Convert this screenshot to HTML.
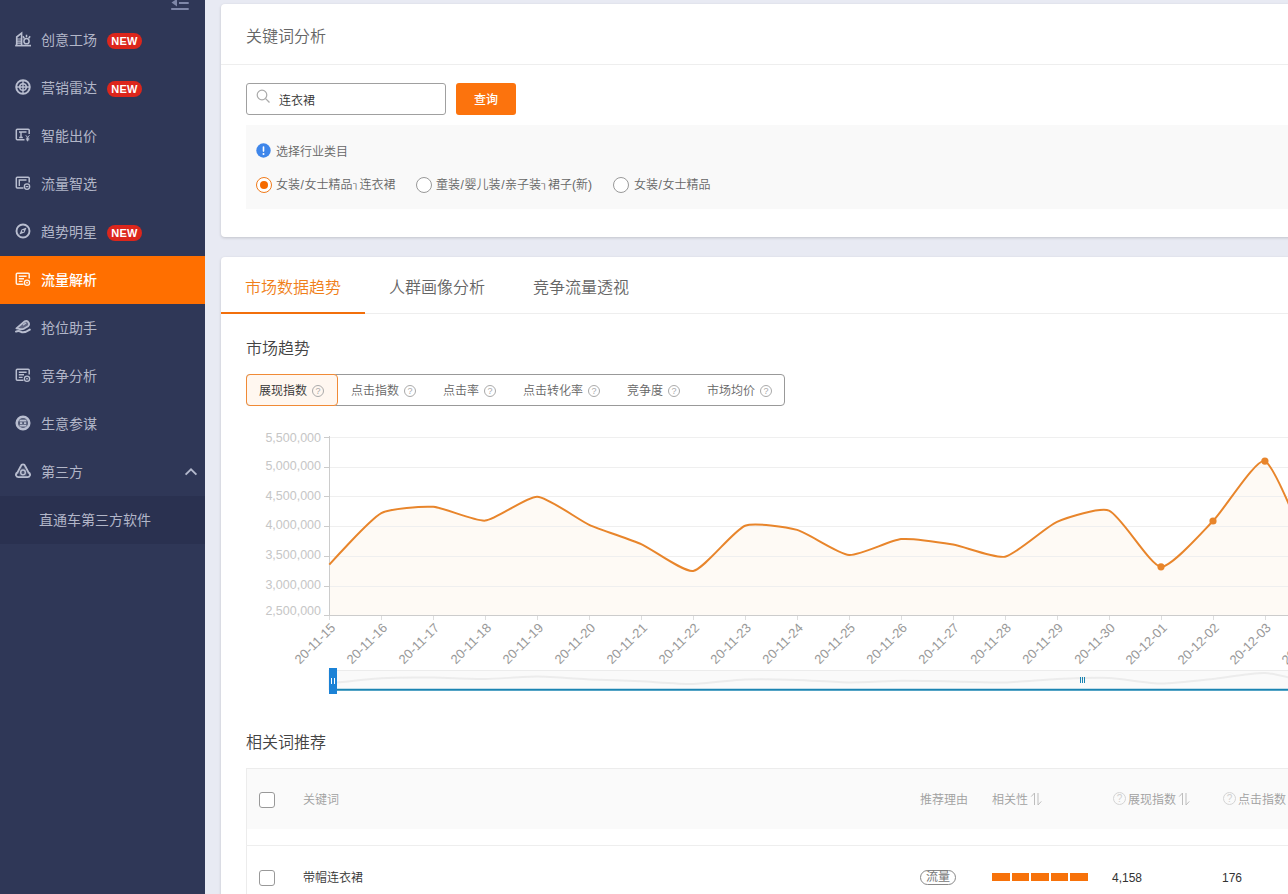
<!DOCTYPE html>
<html lang="zh-CN">
<head>
<meta charset="utf-8">
<title>流量解析</title>
<style>
*{box-sizing:border-box;margin:0;padding:0}
html,body{width:1288px;height:894px;overflow:hidden}
body{background:#e8eaf3;font-family:"Liberation Sans","Noto Sans CJK SC",sans-serif;font-size:12px;color:#333;position:relative;font-weight:350}
.abs{position:absolute}
/* sidebar */
#side{position:absolute;left:0;top:0;width:205px;height:894px;background:#2f3757}
.mi{position:absolute;left:0;width:205px;height:48px;color:#b2b6c8;font-size:14px;line-height:48px;font-weight:400}
.mi .tx{position:absolute;left:41px;top:0;white-space:nowrap}
.mi svg.ic{position:absolute;left:15px;top:15px;width:16px;height:16px;color:#b9bed0}
.mi.act svg.ic{color:#fff3e6}
.mi.act{background:#ff6f00;color:#fff;font-weight:500}
.new{position:absolute;left:107px;top:17px;width:35px;height:16px;border-radius:8px;background:#dc261c;color:#fff;font-size:11px;font-weight:bold;line-height:16px;text-align:center;letter-spacing:0.2px;font-family:"Liberation Sans",sans-serif}
#sub{position:absolute;left:0;top:496px;width:205px;height:48px;background:#2a3150;color:#b2b6c8;font-size:14px;line-height:48px;font-weight:400}
#sub span{position:absolute;left:39px}
/* cards */
.card{position:absolute;left:221px;width:1100px;background:#fff;border-radius:4px;box-shadow:0 1px 3px rgba(0,0,0,.17)}
#c1{top:4px;height:233px}
#c2{top:257px;height:700px}
.t16{font-size:16px;color:#666;white-space:nowrap;position:absolute;line-height:20px}
.hr{position:absolute;left:0;right:0;height:1px;background:#eee}

#inp{position:absolute;left:25px;top:79px;width:200px;height:32px;border:1px solid #a0a0a0;border-radius:3px;background:#fff}
#inp span{position:absolute;left:32px;top:2px;line-height:30px;font-size:12px;color:#333}
#btn{position:absolute;left:235px;top:79px;width:60px;height:32px;border-radius:3px;background:#fc730d;color:#fff;font-size:12px;font-weight:500;text-align:center;line-height:35px}
#gbox{position:absolute;left:25px;top:121px;right:0;height:84px;background:#f9f9f9}
.lab{position:absolute;font-size:12px;color:#666;white-space:nowrap;line-height:16px}
.radio{position:absolute;width:16px;height:16px;border-radius:50%;border:1px solid #999;background:#fff}
.radio.on{border-color:#f07a1a}
.radio.on:after{content:"";position:absolute;left:3px;top:3px;width:8px;height:8px;border-radius:50%;background:#f56a00}
.sep{display:inline-block;width:6px;height:8px;overflow:hidden;font-size:10px;line-height:2px;vertical-align:-2px;margin-right:1px}
.sl{padding:0 .6px}

.tab{position:absolute;top:0;width:144px;height:57px;line-height:61px;text-align:center;font-size:16px;color:#666;white-space:nowrap}
.tab.on{color:#f07f1a;border-bottom:2px solid #f26f0b;z-index:2}
#bg{position:absolute;left:25px;top:117px;width:539px;height:32px;border:1px solid #999;border-radius:4px;background:#fff}
.bb{position:absolute;top:-1px;height:32px;line-height:34px;font-size:12px;color:#666;white-space:nowrap;padding-left:13px}
.bb.on{border:1px solid #f08a36;background:#fff7f0;border-radius:4px;color:#333;padding-left:12px;line-height:32px}
.q{display:inline-block;width:12px;height:12px;border:1px solid #aaa;border-radius:50%;font-size:9px;line-height:10px;text-align:center;color:#aaa;vertical-align:middle;margin-left:5px;position:relative;top:-1px;font-family:"Liberation Sans",sans-serif}
#th{position:absolute;left:25px;top:511px;right:0;height:61px;background:#fafafa;border-top:1px solid #ececec;border-left:1px solid #ececec}
.sort{position:absolute;width:12px;height:14px}
.hq{position:absolute;width:13px;height:13px;border:1px solid #d4d4d4;border-radius:50%;font-size:10px;line-height:11px;text-align:center;color:#d0d0d0;font-family:"Liberation Sans",sans-serif;font-weight:400}
.hc{position:absolute;font-size:12px;color:#a0a0a0;white-space:nowrap;line-height:16px}
.cb{position:absolute;width:16px;height:16px;border:1px solid #999;border-radius:3px;background:#fff}
.td{position:absolute;font-size:12px;color:#333;white-space:nowrap;line-height:16px}
.pill{position:absolute;width:36px;height:15px;border:1px solid #888;border-radius:8px;font-size:12px;line-height:13px;text-align:center;color:#777;font-weight:400}
.bar{position:absolute;height:8px;width:17.6px;background:#f7720a}
</style>
</head>
<body>
<div id="side">
  <svg class="abs" style="left:170px;top:0;width:20px;height:12px" viewBox="0 0 20 12"><path d="M9 3H18.7M1.2 9H18.7" stroke="#7f87a8" stroke-width="2" fill="none"/><path d="M7 -1.2L1.5 2.6L7 6.4Z" fill="#7f87a8"/></svg>
  <div class="mi" style="top:16px"><svg class="ic" viewBox="0 0 16 16"><g fill="none" stroke="currentColor" stroke-width="1.6"><path d="M1.7 14.2V6L6.6 2.2V14.2"/><path d="M2 8H6.4M2 10.1H6.4M2 12.2H6.4" stroke-width="1.2"/><circle cx="11.5" cy="10.2" r="2.6" stroke-width="1.5"/><path d="M11.5 3.8V6.2M7.9 5.3L9.3 7.3M15.1 5.3L13.7 7.3" stroke-width="1.5"/><path d="M0.2 14.6H16" stroke-width="1.7"/></g></svg><span class="tx">创意工场</span><span class="new">NEW</span></div>
  <div class="mi" style="top:64px"><svg class="ic" viewBox="0 0 16 16"><g fill="none" stroke="currentColor"><circle cx="8" cy="8" r="6.8" stroke-width="1.9"/><circle cx="8" cy="8" r="3.3" stroke-width="1.5"/><path d="M8 1V15M1 8H15" stroke-width="1.4"/></g></svg><span class="tx">营销雷达</span><span class="new">NEW</span></div>
  <div class="mi" style="top:112px"><svg class="ic" viewBox="0 0 16 16"><g fill="none" stroke="currentColor" stroke-width="1.5"><path d="M9.5 12.8H2.3Q1.3 12.8 1.3 11.8V3.2Q1.3 2.2 2.3 2.2H13.2Q14.2 2.2 14.2 3.2V7"/><path d="M4 5H11.5M6 5V10.5M4.2 10.5H7.8" stroke-width="1.4"/><path d="M10.8 8.3L12.6 10.4L14.4 8.3M12.6 10.4V14.3M10.9 11.2H14.3M10.9 12.8H14.3" stroke-width="1"/></g></svg><span class="tx">智能出价</span></div>
  <div class="mi" style="top:160px"><svg class="ic" viewBox="0 0 16 16"><g fill="none" stroke="currentColor" stroke-width="1.5"><path d="M8.5 13H2.3Q1.3 13 1.3 12V3.2Q1.3 2.2 2.3 2.2H13.2Q14.2 2.2 14.2 3.2V7.5"/><path d="M4.3 11V5H11.5" stroke-width="1.4"/><circle cx="12" cy="11.6" r="2.7" stroke-width="1.3"/><path d="M10.6 11.6H13.4" stroke-width="1.2"/></g></svg><span class="tx">流量智选</span></div>
  <div class="mi" style="top:208px"><svg class="ic" viewBox="0 0 16 16"><g fill="none" stroke="currentColor"><circle cx="8" cy="8" r="6.5" stroke-width="1.9"/><path d="M11.6 4.4L9.5 9.5L4.4 11.6L6.5 6.5Z" fill="currentColor" stroke="none"/><circle cx="8" cy="8" r="1" fill="#2f3757" stroke="none"/></g></svg><span class="tx">趋势明星</span><span class="new">NEW</span></div>
  <div class="mi act" style="top:256px"><svg class="ic" viewBox="0 0 16 16"><g fill="none" stroke="currentColor" stroke-width="1.5"><path d="M8.5 13.3H2.3Q1.3 13.3 1.3 12.3V3.2Q1.3 2.2 2.3 2.2H13.2Q14.2 2.2 14.2 3.2V7.5"/><path d="M3.8 5.2H11.6M3.8 7.8H9M3.8 10.4H7.6" stroke-width="1.4"/><circle cx="12" cy="11.7" r="2.6" stroke-width="1.3"/><circle cx="12" cy="11.7" r=".9" fill="currentColor" stroke="none"/></g></svg><span class="tx">流量解析</span></div>
  <div class="mi" style="top:304px"><svg class="ic" viewBox="0 0 16 16"><g fill="none" stroke="currentColor" stroke-width="1.8" stroke-linecap="round" stroke-linejoin="round"><path d="M1.4 9.4L9.8 2.2Q11.5 1.3 12.8 2.5L14 4.3Q14.6 6 13.1 7.2L9.2 9.6Q6.5 10.8 4 9.8Z" fill="currentColor" fill-opacity=".35"/><path d="M8.5 5.8L10.8 4.1" stroke-width="1.3"/><path d="M1 12.6Q3.5 11.4 6 12.8Q9 14.4 14.8 10.6" stroke-width="1.9"/></g></svg><span class="tx">抢位助手</span></div>
  <div class="mi" style="top:352px"><svg class="ic" viewBox="0 0 16 16"><g fill="none" stroke="currentColor" stroke-width="1.5"><path d="M8.5 13.3H2.3Q1.3 13.3 1.3 12.3V3.2Q1.3 2.2 2.3 2.2H13.2Q14.2 2.2 14.2 3.2V7.5"/><path d="M3.8 5.2H11.6M3.8 7.8H9M3.8 10.4H7.6" stroke-width="1.4"/><circle cx="12" cy="11.7" r="2.6" stroke-width="1.3"/><circle cx="12" cy="11.7" r=".9" fill="currentColor" stroke="none"/></g></svg><span class="tx">竞争分析</span></div>
  <div class="mi" style="top:400px"><svg class="ic" viewBox="0 0 16 16"><g fill="none" stroke="currentColor"><circle cx="8" cy="8" r="6.3" stroke-width="2.5" fill="currentColor" fill-opacity=".25"/><path d="M4.6 5.6H11.4M4.6 10.6H11.4M5 8.1H7.2M9 8.1H11.2" stroke-width="1.6"/></g></svg><span class="tx">生意参谋</span></div>
  <div class="mi" style="top:448px"><svg class="ic" viewBox="0 0 16 16"><g fill="none" stroke="currentColor" stroke-width="1.9" stroke-linejoin="round"><path d="M8 1.4Q9.6 1.4 10.2 3.1L13.5 9.4Q15.5 10.6 14.9 12.5Q14.1 14.4 12 14.1H4Q1.9 14.4 1.1 12.5Q0.5 10.6 2.5 9.4L5.8 3.1Q6.4 1.4 8 1.4Z" fill="currentColor" fill-opacity=".2"/><circle cx="8" cy="9.4" r="2.3" stroke-width="1.5"/><circle cx="8" cy="4" r=".9" fill="#2f3757" stroke="none"/><circle cx="3.4" cy="12" r=".9" fill="#2f3757" stroke="none"/><circle cx="12.6" cy="12" r=".9" fill="#2f3757" stroke="none"/></g></svg><span class="tx">第三方</span><svg class="abs" style="left:184px;top:19px;width:14px;height:10px" viewBox="0 0 14 10"><path d="M1.6 7.6L7 2.4L12.4 7.6" fill="none" stroke="#b4b9cd" stroke-width="1.9"/></svg></div>
  <div id="sub"><span>直通车第三方软件</span></div>
</div>

<div class="card" id="c1">
  <div class="t16" style="left:25px;top:23px">关键词分析</div>
  <div class="hr" style="top:60px"></div>
  <div id="inp"><svg class="abs" style="left:8.5px;top:5px;width:15px;height:15px" viewBox="0 0 15 15"><circle cx="6" cy="6" r="4.8" fill="none" stroke="#aaa" stroke-width="1.2"/><path d="M9.6 9.6L13.5 13.5" stroke="#aaa" stroke-width="1.3"/></svg><span>连衣裙</span></div>
  <div id="btn">查询</div>
  <div id="gbox">
    <svg class="abs" style="left:10px;top:18px;width:15px;height:15px" viewBox="0 0 15 15"><circle cx="7.5" cy="7.5" r="7.2" fill="#3e86ea"/><rect x="6.7" y="3.3" width="1.6" height="5.6" rx=".8" fill="#fff"/><circle cx="7.5" cy="11" r="1" fill="#fff"/></svg>
    <div class="lab" style="left:30px;top:19px">选择行业类目</div>
    <div class="radio on" style="left:10px;top:52px"></div>
    <div class="lab" style="left:30px;top:52px">女装<span class="sl">/</span>女士精品<span class="sep">┐</span>连衣裙</div>
    <div class="radio" style="left:170px;top:52px"></div>
    <div class="lab" style="left:190px;top:52px">童装<span class="sl">/</span>婴儿装<span class="sl">/</span>亲子装<span class="sep">┐</span>裙子(新)</div>
    <div class="radio" style="left:367px;top:52px"></div>
    <div class="lab" style="left:388px;top:52px">女装<span class="sl">/</span>女士精品</div>
  </div>
</div>

<div class="card" id="c2">
  <div class="tab on" style="left:0">市场数据趋势</div>
  <div class="tab" style="left:144px">人群画像分析</div>
  <div class="tab" style="left:288px">竞争流量透视</div>
  <div class="hr" style="top:56px"></div>
  <div class="t16" style="left:25px;top:82px;color:#444">市场趋势</div>
  <div id="bg">
    <div class="bb on" style="left:-1px;width:92px">展现指数<span class="q">?</span></div>
    <div class="bb" style="left:91px">点击指数<span class="q">?</span></div>
    <div class="bb" style="left:183px">点击率<span class="q">?</span></div>
    <div class="bb" style="left:263px">点击转化率<span class="q">?</span></div>
    <div class="bb" style="left:367px">竞争度<span class="q">?</span></div>
    <div class="bb" style="left:447px">市场均价<span class="q">?</span></div>
  </div>
  <div class="t16" style="left:25px;top:476px;color:#444">相关词推荐</div>
  <div id="th">
    <div class="cb" style="left:12px;top:23px"></div>
    <div class="hc" style="left:56px;top:23px">关键词</div>
    <div class="hc" style="left:673px;top:23px">推荐理由</div>
    <div class="hc" style="left:745px;top:23px">相关性</div>
    <svg class="sort" style="left:783px;top:23px" viewBox="0 0 12 14"><path d="M4.5 1V13M4.5 1L1.2 4.6M8 1V13M8 13L11.3 9.4" fill="none" stroke="#bdbdbd" stroke-width="1"/></svg>
    <div class="hq" style="left:866px;top:23px">?</div>
    <div class="hc" style="left:881px;top:23px">展现指数</div>
    <svg class="sort" style="left:931px;top:23px" viewBox="0 0 12 14"><path d="M4.5 1V13M4.5 1L1.2 4.6M8 1V13M8 13L11.3 9.4" fill="none" stroke="#bdbdbd" stroke-width="1"/></svg>
    <div class="hq" style="left:976px;top:23px">?</div>
    <div class="hc" style="left:991px;top:23px">点击指数</div>
  </div>
  <div class="abs" style="left:25px;top:572px;width:1px;height:400px;background:#ececec"></div>
  <div class="hr" style="top:588px;left:25px"></div>
  <div class="cb" style="left:38px;top:613px"></div>
  <div class="td" style="left:82px;top:613px">带帽连衣裙</div>
  <div class="pill" style="left:699px;top:613px">流量</div>
  <div class="bar" style="left:771px;top:616px"></div>
  <div class="bar" style="left:790.6px;top:616px"></div>
  <div class="bar" style="left:810.2px;top:616px"></div>
  <div class="bar" style="left:829.8px;top:616px"></div>
  <div class="bar" style="left:849.4px;top:616px"></div>
  <div class="td" style="left:891px;top:613px">4,158</div>
  <div class="td" style="left:1001px;top:613px">176</div>
</div>
<svg class="abs" style="left:0;top:0;width:1288px;height:894px;pointer-events:none" viewBox="0 0 1288 894">
<path d="M329.3 564.7 C329.3 564.7 369.2 519.9 381.3 513.1 C389.9 508.3 423.0 506.1 433.3 506.8 C443.8 507.6 475.2 521.6 485.2 520.6 C496.0 519.6 527.0 496.3 537.2 496.7 C547.8 497.1 578.5 519.9 589.2 524.8 C599.3 529.4 631.1 539.6 641.2 544.1 C651.9 548.8 683.6 572.6 693.2 570.9 C704.4 568.9 733.3 530.4 745.1 525.7 C754.1 522.2 787.3 527.1 797.1 529.9 C808.0 533.0 838.4 554.1 849.1 555.0 C859.2 555.9 890.5 540.2 901.1 539.1 C911.3 538.1 942.8 542.8 953.1 544.5 C963.6 546.3 995.5 558.8 1005.0 556.7 C1016.3 554.3 1045.8 526.9 1057.0 521.9 C1066.6 517.7 1100.5 506.9 1109.0 510.6 C1121.3 515.9 1150.1 565.7 1161.0 566.8 C1170.9 567.8 1203.3 530.9 1213.0 521.0 C1224.1 509.7 1256.9 456.9 1264.9 461.1 C1277.7 467.7 1316.9 575.0 1316.9 575.0 L1316.9 615.4 L329.3 615.4 Z" fill="#fefaf5"/>
<path d="M329.5 437.5H1288" stroke="#efefef" stroke-width="1"/>
<path d="M329.5 467.5H1288" stroke="#efefef" stroke-width="1"/>
<path d="M329.5 496.5H1288" stroke="#efefef" stroke-width="1"/>
<path d="M329.5 526.5H1288" stroke="#efefef" stroke-width="1"/>
<path d="M329.5 556.5H1288" stroke="#efefef" stroke-width="1"/>
<path d="M329.5 586.5H1288" stroke="#efefef" stroke-width="1"/>
<path d="M329.5 436V616" stroke="#ccc" stroke-width="1"/>
<path d="M329 615.5H1288" stroke="#ccc" stroke-width="1"/>
<path d="M324 437.5H329" stroke="#ccc" stroke-width="1"/>
<text x="321" y="442.3" text-anchor="end" font-size="12.5" fill="#c6c6c6">5,500,000</text>
<path d="M324 467.5H329" stroke="#ccc" stroke-width="1"/>
<text x="321" y="469.9" text-anchor="end" font-size="12.5" fill="#c6c6c6">5,000,000</text>
<path d="M324 496.5H329" stroke="#ccc" stroke-width="1"/>
<text x="321" y="499.6" text-anchor="end" font-size="12.5" fill="#c6c6c6">4,500,000</text>
<path d="M324 526.5H329" stroke="#ccc" stroke-width="1"/>
<text x="321" y="529.4" text-anchor="end" font-size="12.5" fill="#c6c6c6">4,000,000</text>
<path d="M324 556.5H329" stroke="#ccc" stroke-width="1"/>
<text x="321" y="559.2" text-anchor="end" font-size="12.5" fill="#c6c6c6">3,500,000</text>
<path d="M324 586.5H329" stroke="#ccc" stroke-width="1"/>
<text x="321" y="588.9" text-anchor="end" font-size="12.5" fill="#c6c6c6">3,000,000</text>
<path d="M324 615.5H329" stroke="#ccc" stroke-width="1"/>
<text x="321" y="615.2" text-anchor="end" font-size="12.5" fill="#c6c6c6">2,500,000</text>
<path d="M329.5 616V620" stroke="#ddd" stroke-width="1"/>
<text transform="translate(330.1 622.5) rotate(-45)" x="0" y="8.5" text-anchor="end" font-size="13" fill="#999">20-11-15</text>
<path d="M381.5 616V620" stroke="#ddd" stroke-width="1"/>
<text transform="translate(382.1 622.5) rotate(-45)" x="0" y="8.5" text-anchor="end" font-size="13" fill="#999">20-11-16</text>
<path d="M433.5 616V620" stroke="#ddd" stroke-width="1"/>
<text transform="translate(434.1 622.5) rotate(-45)" x="0" y="8.5" text-anchor="end" font-size="13" fill="#999">20-11-17</text>
<path d="M485.5 616V620" stroke="#ddd" stroke-width="1"/>
<text transform="translate(486.0 622.5) rotate(-45)" x="0" y="8.5" text-anchor="end" font-size="13" fill="#999">20-11-18</text>
<path d="M537.5 616V620" stroke="#ddd" stroke-width="1"/>
<text transform="translate(538.0 622.5) rotate(-45)" x="0" y="8.5" text-anchor="end" font-size="13" fill="#999">20-11-19</text>
<path d="M589.5 616V620" stroke="#ddd" stroke-width="1"/>
<text transform="translate(590.0 622.5) rotate(-45)" x="0" y="8.5" text-anchor="end" font-size="13" fill="#999">20-11-20</text>
<path d="M641.5 616V620" stroke="#ddd" stroke-width="1"/>
<text transform="translate(642.0 622.5) rotate(-45)" x="0" y="8.5" text-anchor="end" font-size="13" fill="#999">20-11-21</text>
<path d="M693.5 616V620" stroke="#ddd" stroke-width="1"/>
<text transform="translate(694.0 622.5) rotate(-45)" x="0" y="8.5" text-anchor="end" font-size="13" fill="#999">20-11-22</text>
<path d="M745.5 616V620" stroke="#ddd" stroke-width="1"/>
<text transform="translate(745.9 622.5) rotate(-45)" x="0" y="8.5" text-anchor="end" font-size="13" fill="#999">20-11-23</text>
<path d="M797.5 616V620" stroke="#ddd" stroke-width="1"/>
<text transform="translate(797.9 622.5) rotate(-45)" x="0" y="8.5" text-anchor="end" font-size="13" fill="#999">20-11-24</text>
<path d="M849.5 616V620" stroke="#ddd" stroke-width="1"/>
<text transform="translate(849.9 622.5) rotate(-45)" x="0" y="8.5" text-anchor="end" font-size="13" fill="#999">20-11-25</text>
<path d="M901.5 616V620" stroke="#ddd" stroke-width="1"/>
<text transform="translate(901.9 622.5) rotate(-45)" x="0" y="8.5" text-anchor="end" font-size="13" fill="#999">20-11-26</text>
<path d="M953.5 616V620" stroke="#ddd" stroke-width="1"/>
<text transform="translate(953.9 622.5) rotate(-45)" x="0" y="8.5" text-anchor="end" font-size="13" fill="#999">20-11-27</text>
<path d="M1005.5 616V620" stroke="#ddd" stroke-width="1"/>
<text transform="translate(1005.8 622.5) rotate(-45)" x="0" y="8.5" text-anchor="end" font-size="13" fill="#999">20-11-28</text>
<path d="M1057.5 616V620" stroke="#ddd" stroke-width="1"/>
<text transform="translate(1057.8 622.5) rotate(-45)" x="0" y="8.5" text-anchor="end" font-size="13" fill="#999">20-11-29</text>
<path d="M1109.5 616V620" stroke="#ddd" stroke-width="1"/>
<text transform="translate(1109.8 622.5) rotate(-45)" x="0" y="8.5" text-anchor="end" font-size="13" fill="#999">20-11-30</text>
<path d="M1161.5 616V620" stroke="#ddd" stroke-width="1"/>
<text transform="translate(1161.8 622.5) rotate(-45)" x="0" y="8.5" text-anchor="end" font-size="13" fill="#999">20-12-01</text>
<path d="M1213.5 616V620" stroke="#ddd" stroke-width="1"/>
<text transform="translate(1213.8 622.5) rotate(-45)" x="0" y="8.5" text-anchor="end" font-size="13" fill="#999">20-12-02</text>
<path d="M1265.5 616V620" stroke="#ddd" stroke-width="1"/>
<text transform="translate(1265.7 622.5) rotate(-45)" x="0" y="8.5" text-anchor="end" font-size="13" fill="#999">20-12-03</text>
<path d="M1317.5 616V620" stroke="#ddd" stroke-width="1"/>
<text transform="translate(1317.7 622.5) rotate(-45)" x="0" y="8.5" text-anchor="end" font-size="13" fill="#999">20-12-04</text>
<path d="M329.3 564.7 C329.3 564.7 369.2 519.9 381.3 513.1 C389.9 508.3 423.0 506.1 433.3 506.8 C443.8 507.6 475.2 521.6 485.2 520.6 C496.0 519.6 527.0 496.3 537.2 496.7 C547.8 497.1 578.5 519.9 589.2 524.8 C599.3 529.4 631.1 539.6 641.2 544.1 C651.9 548.8 683.6 572.6 693.2 570.9 C704.4 568.9 733.3 530.4 745.1 525.7 C754.1 522.2 787.3 527.1 797.1 529.9 C808.0 533.0 838.4 554.1 849.1 555.0 C859.2 555.9 890.5 540.2 901.1 539.1 C911.3 538.1 942.8 542.8 953.1 544.5 C963.6 546.3 995.5 558.8 1005.0 556.7 C1016.3 554.3 1045.8 526.9 1057.0 521.9 C1066.6 517.7 1100.5 506.9 1109.0 510.6 C1121.3 515.9 1150.1 565.7 1161.0 566.8 C1170.9 567.8 1203.3 530.9 1213.0 521.0 C1224.1 509.7 1256.9 456.9 1264.9 461.1 C1277.7 467.7 1316.9 575.0 1316.9 575.0" fill="none" stroke="#e8852b" stroke-width="2" stroke-linejoin="round"/>
<circle cx="1161.0" cy="566.8" r="3.6" fill="#e8852b"/>
<circle cx="1213.0" cy="521.0" r="3.6" fill="#e8852b"/>
<circle cx="1264.9" cy="461.1" r="3.6" fill="#e8852b"/>
<rect x="329" y="670.5" width="960" height="19" fill="#fafafa" stroke="#ececec" stroke-width="1"/>
<path d="M329.3 683.4 C329.3 683.4 370.9 678.8 381.3 678.2 C391.7 677.6 422.9 677.5 433.3 677.6 C443.7 677.7 474.8 679.1 485.2 679.0 C495.6 678.9 526.8 676.5 537.2 676.6 C547.6 676.6 578.8 678.9 589.2 679.4 C599.6 679.9 630.8 680.8 641.2 681.3 C651.6 681.8 682.8 684.2 693.2 684.0 C703.6 683.8 734.7 679.9 745.1 679.5 C755.5 679.1 786.7 679.6 797.1 679.9 C807.5 680.2 838.7 682.3 849.1 682.4 C859.5 682.5 890.7 680.9 901.1 680.8 C911.5 680.7 942.7 681.2 953.1 681.4 C963.5 681.5 994.7 682.8 1005.0 682.6 C1015.4 682.3 1046.6 679.6 1057.0 679.1 C1067.4 678.6 1098.6 677.5 1109.0 678.0 C1119.4 678.4 1150.6 683.5 1161.0 683.6 C1171.4 683.7 1202.6 680.1 1213.0 679.0 C1223.4 677.9 1254.6 672.5 1264.9 673.0 C1275.4 673.6 1316.9 684.4 1316.9 684.4" fill="none" stroke="#ececec" stroke-width="2"/>
<path d="M329 689.7H1288" stroke="#1a84b2" stroke-width="2"/>
<rect x="329" y="668" width="8" height="26" fill="#1b82d6"/>
<path d="M331.5 678v6M334.5 678v6" stroke="#fff" stroke-width="1"/>
<path d="M1080.5 677v6M1082.5 677v6M1084.5 677v6" stroke="#1a84b2" stroke-width="1"/>
</svg>
</body>
</html>
